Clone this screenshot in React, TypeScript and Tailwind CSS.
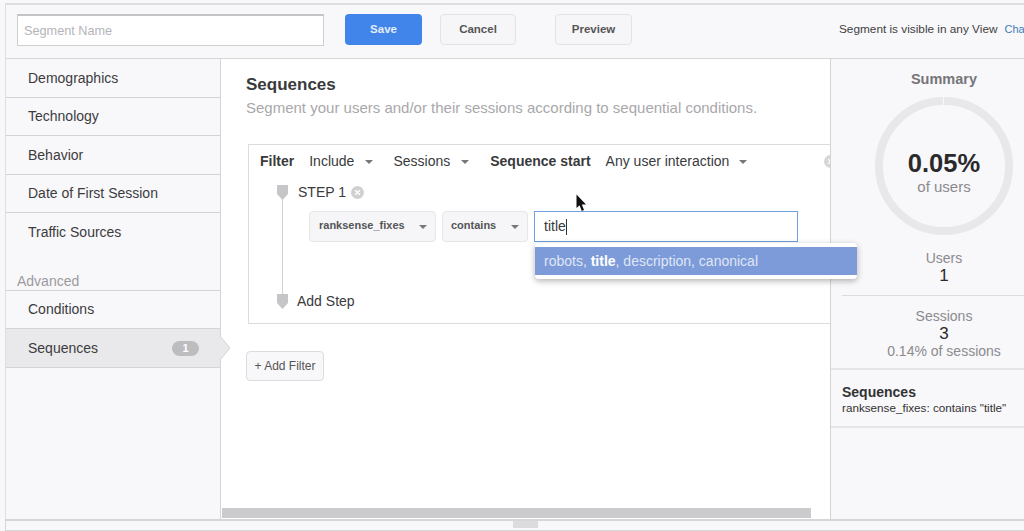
import React from "react";

const Caret = () => (
  <span className="inline-block w-0 h-0 border-x-[4px] border-x-transparent border-t-[4px] border-t-[#777]" />
);

const StepMark = () => (
  <svg width="11" height="15" viewBox="0 0 11 15" className="block">
    <path d="M0 0H11V9L5.5 15L0 9Z" fill="#c6c6c8" />
  </svg>
);

const ClearIcon = ({ color = "#d0d0d2" }: { color?: string }) => (
  <svg width="13" height="13" viewBox="0 0 13 13" className="block">
    <circle cx="6.5" cy="6.5" r="6.5" fill={color} />
    <path d="M4.2 4.2L8.8 8.8M8.8 4.2L4.2 8.8" stroke="#fff" strokeWidth="1.4" />
  </svg>
);

const Cursor = () => (
  <svg width="11" height="18" viewBox="0 0 11 18" className="block">
    <path d="M0.5 0.5V14L3.6 11.2L5.8 17L8 16L5.8 10.4H10Z" fill="#111" />
  </svg>
);

const SideItem = ({ label, border = true }: { label: string; border?: boolean }) => (
  <div className={`h-[38.5px] pl-[22px] pt-[1px] flex items-center text-[14px] text-[#3c3c3e] ${border ? "border-b border-[#d4d3d6]" : ""}`}>
    {label}
  </div>
);

const Select = ({ label, className }: { label: string; className: string }) => (
  <div className={`h-[31px] pb-[1px] flex items-center justify-between rounded-sm border border-[#e6e5e8] bg-[#f6f5f8] text-[11px] font-bold text-[#555] ${className}`}>
    <span className="pb-[2px]">{label}</span>
    <span className="flex pt-[2px]"><Caret /></span>
  </div>
);

export default function App() {
  return (
    <div className="w-[1024px] h-[531px] overflow-hidden bg-[#f8f7fa] pl-[5px] pt-[3px] flex flex-col font-['Liberation_Sans',Arial,sans-serif]">
      <div className="flex-1 min-h-0 flex flex-col border-l border-t-2 border-[#dededf]">
        {/* top bar */}
        <div className="h-[54px] shrink-0 flex items-center border-b border-[#d6d5d8] pl-[11px] pb-[4px]">
          <div className="w-[307px] h-[32px] flex items-center border border-[#cfcfd0] border-t-2 border-t-[#c4c4c6] bg-white pl-[6px] pt-[3px] text-[12.7px] text-[#b4b4b6]">
            Segment Name
          </div>
          <button className="ml-[21px] w-[77px] h-[31px] rounded-sm bg-[#4285ea] text-[11.5px] font-bold text-[#e3edfb]">
            Save
          </button>
          <button className="ml-[18px] w-[76px] h-[31px] rounded-sm border border-[#e3e2e5] bg-[#f6f5f8] text-[11.5px] font-bold text-[#555]">
            Cancel
          </button>
          <button className="ml-[39px] w-[77px] h-[31px] rounded-sm border border-[#e3e2e5] bg-[#f6f5f8] text-[11.5px] font-bold text-[#555]">
            Preview
          </button>
          <div className="ml-auto w-[185px] flex items-baseline whitespace-nowrap text-[11.8px] text-[#3f3f41]">
            Segment is visible in any View
            <span className="ml-[7px] text-[11px] text-[#3b7cb8]">Cha</span>
          </div>
        </div>

        <div className="flex-1 min-h-0 flex">
          {/* sidebar */}
          <div className="relative z-20 w-[215px] shrink-0 border-r border-[#d4d3d6] bg-[#f8f7fa]">
            <SideItem label="Demographics" />
            <SideItem label="Technology" />
            <SideItem label="Behavior" />
            <SideItem label="Date of First Session" />
            <SideItem label="Traffic Sources" border={false} />
            <div className="h-[39px] pl-[11px] pt-[21px] text-[14px] leading-[17px] text-[#9b9b9d] border-b border-[#d4d3d6]">
              Advanced
            </div>
            <SideItem label="Conditions" />
            <div className="relative h-[39px] pl-[22px] pr-[21px] pt-[1px] flex items-center justify-between text-[14px] text-[#3c3c3e] bg-[#e9e8eb] border-b border-[#d4d3d6]">
              Sequences
              <span className="w-[27px] h-[15px] rounded-full bg-[#bdbcbf] flex items-center justify-center text-[11px] font-bold text-white">
                1
              </span>
              <svg width="11" height="24" viewBox="0 0 11 24" className="absolute right-[-11px] top-[7px]">
                <path d="M0 0L10 12L0 24Z" fill="#e9e8eb" />
                <path d="M0 0L10 12L0 24" fill="none" stroke="#d4d3d6" />
              </svg>
            </div>
          </div>

          {/* main */}
          <div className="relative z-10 w-[610px] shrink-0 bg-white border-r border-[#d4d3d6]">
            <div className="h-full overflow-hidden">
              <div className="pl-[25px] pt-[16px]">
                <div className="text-[17px] leading-[20px] font-bold text-[#3a3a3c]">Sequences</div>
                <div className="mt-[3px] text-[15px] leading-[20px] text-[#a8a8aa] whitespace-nowrap">
                  Segment your users and/or their sessions according to sequential conditions.
                </div>
              </div>

              <div className="ml-[27px] mt-[26px] w-[640px] h-[180px] border border-[#dcdcde]">
                <div className="h-[33px] pl-[11px] flex items-center text-[14px] text-[#3a3a3c] whitespace-nowrap">
                  <span className="font-bold">Filter</span>
                  <span className="ml-[15px]">Include</span>
                  <span className="ml-[11px] flex"><Caret /></span>
                  <span className="ml-[20px]">Sessions</span>
                  <span className="ml-[11px] flex"><Caret /></span>
                  <span className="ml-[21px] font-bold">Sequence start</span>
                  <span className="ml-[15px]">Any user interaction</span>
                  <span className="ml-[10px] flex"><Caret /></span>
                  <span className="ml-[77px]"><ClearIcon color="#d6d6d8" /></span>
                </div>

                <div className="relative pl-[28px] h-[145px]">
                  <div className="absolute left-[33px] top-[9px] h-[110px] w-px bg-[#d0d0d2]" />
                  <div className="relative flex items-center h-[24px] mt-[2px] text-[14px] text-[#3a3a3c]">
                    <StepMark />
                    <span className="ml-[10px]">STEP 1</span>
                    <span className="ml-[5px]"><ClearIcon /></span>
                  </div>
                  <div className="relative flex items-center mt-[7px] ml-[32px]">
                    <Select label="ranksense_fixes" className="w-[127px] pl-[9px] pr-[8px]" />
                    <Select label="contains" className="ml-[6px] w-[86px] pl-[8px] pr-[8px]" />
                    <div className="ml-[6px] w-[264px] h-[31px] flex items-center border border-[#6f9fdc] bg-white pl-[9px] text-[14px] text-[#3a3a3c]">
                      title<span className="w-px h-[16px] bg-[#333]" />
                    </div>
                  </div>
                  <div className="absolute left-[28px] bottom-[13px] flex items-center text-[14px] text-[#3a3a3c]">
                    <StepMark />
                    <span className="ml-[9px]">Add Step</span>
                  </div>
                </div>
              </div>

              <button className="ml-[25px] mt-[27px] w-[78px] h-[30px] rounded-sm border border-[#dcdcde] bg-[#f8f7fa] text-[12px] text-[#555]">
                + Add Filter
              </button>
            </div>

            {/* autocomplete menu */}
            <div className="absolute left-[314px] top-[184px] w-[322px] py-[4px] bg-white rounded-sm shadow-[0_2px_6px_rgba(0,0,0,0.3)]">
              <div className="h-[28px] pl-[9px] flex items-center bg-[#7e9bd9] text-[14px] text-[#dfe6f5] whitespace-nowrap">
                robots,&nbsp;<b className="text-white">title</b>, description, canonical
              </div>
            </div>

            {/* scrollbar */}
            <div className="absolute left-[1px] bottom-[1px] w-[589px] h-[10px] bg-[#cbcacd]" />
            {/* mouse pointer */}
            <div className="absolute left-[355px] top-[135px]"><Cursor /></div>
          </div>

          {/* summary */}
          <div className="flex-1 min-w-0 bg-[#f8f7fa] overflow-hidden">
            <div className="w-[226px]">
              <div className="pt-[12px] text-center text-[14.5px] leading-[17px] font-bold text-[#757577]">Summary</div>
              <div className="relative mx-auto mt-[9px] w-[138px] h-[138px] rounded-full border-[8px] border-[#e8e7ea] flex flex-col items-center justify-center pt-[14px]">
                <div className="absolute left-[60px] top-[-8px] w-px h-[8px] bg-[#f8f7fa]" />
                <div className="text-[25.5px] leading-[28px] font-bold text-[#2a2a2c]">0.05%</div>
                <div className="text-[15px] leading-[20px] text-[#8b8b8d]">of users</div>
              </div>
              <div className="ml-[11px] pr-[11px] h-[61px] pt-[14px] border-b border-[#dcdbde] text-center">
                <div className="text-[14px] leading-[18px] text-[#8b8b8d]">Users</div>
                <div className="text-[17px] leading-[17px] text-[#2a2a2c]">1</div>
              </div>
              <div className="h-[74px] pt-[11px] border-b-2 border-[#e6e5e8] text-center">
                <div className="text-[14px] leading-[18px] text-[#8b8b8d]">Sessions</div>
                <div className="text-[17px] leading-[17px] text-[#2a2a2c]">3</div>
                <div className="text-[14px] leading-[18px] text-[#8b8b8d]">0.14% of sessions</div>
              </div>
              <div className="h-[58px] pl-[11px] pt-[14px] border-b-2 border-[#e6e5e8] text-[#333]">
                <div className="text-[14px] leading-[16px] font-bold">Sequences</div>
                <div className="text-[11.7px] leading-[16px] whitespace-nowrap">ranksense_fixes: contains "title"</div>
              </div>
            </div>
          </div>
        </div>
      </div>
      <div className="h-[12px] shrink-0 border-l border-t-2 border-b border-[#d6d5d8] flex justify-center">
        <div className="w-[25px] h-[7px] ml-[20px] bg-[#dcdbde]" />
      </div>
    </div>
  );
}
